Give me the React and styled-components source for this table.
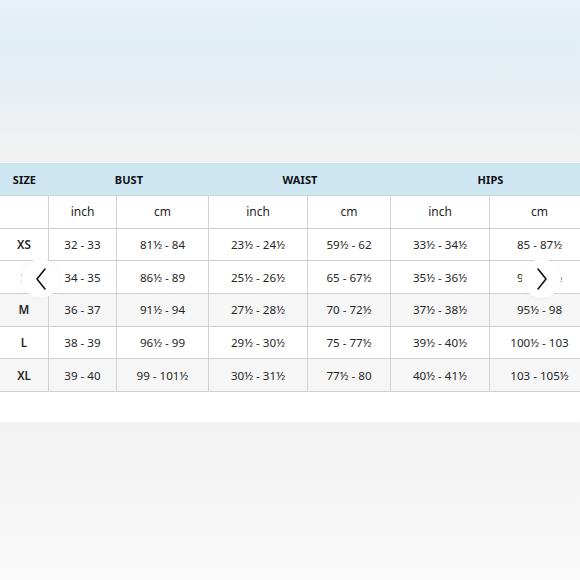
import React from "react";
import styled, { createGlobalStyle } from "styled-components";

const Global = createGlobalStyle`
  html, body { margin: 0; padding: 0; background: #ffffff; }
  body { overflow: hidden; font-family: "Noto Sans", "Open Sans", Arial, sans-serif; color: #222; }
`;

const Page = styled.div`
  width: 580px;
  height: 580px;
  display: flex;
  flex-direction: column;
  overflow: hidden;
  position: relative;
`;

const Sky = styled.div`
  height: 162px;
  flex: none;
  background: linear-gradient(180deg, #e6f2f8 0%, #e2eef5 30%, #e9eff3 60%, #eff1f2 85%, #f1f2f2 100%);
  border-bottom: 1px solid #fbfcfd;
`;

const Card = styled.div`
  background: #ffffff;
  padding-bottom: 30px;
  flex: none;
  position: relative;
`;

const Floor = styled.div`
  flex: 1;
  background: linear-gradient(180deg, #f2f2f2 0%, #f5f5f5 45%, #fafafa 100%);
`;

const cols = "49px 68px 92px 99px 83px 99px 100px";

const HeadRow = styled.div`
  display: grid;
  grid-template-columns: 49px 160px 182px 199px;
  width: 590px;
  height: 33px;
  background: #cde6f2;
  border-bottom: 1px solid #c9d3d8;
  box-sizing: border-box;
`;

const HeadCell = styled.div`
  display: flex;
  align-items: center;
  justify-content: center;
  font-size: 11px;
  font-weight: 700;
  color: #111;
  letter-spacing: 0.1px;
`;

const Row = styled.div`
  display: grid;
  grid-template-columns: ${cols};
  width: 590px;
  height: 32.7px;
  box-sizing: border-box;
  border-bottom: 1px solid #cfcfcf;
  background: ${(p) => (p.$shade ? "#f6f6f6" : "#ffffff")};
`;

const Cell = styled.div`
  display: flex;
  align-items: center;
  justify-content: center;
  border-right: 1px solid #d2d2d2;
  font-size: ${(p) => (p.$unit ? "12px" : "11.6px")};
  font-weight: ${(p) => (p.$bold ? 600 : 400)};
  color: #262626;
  white-space: nowrap;
`;

const Arrow = styled.button`
  position: absolute;
  top: 96px;
  ${(p) => (p.$side === "left" ? "left: 21px;" : "left: 522px;")}
  width: 39px;
  height: 39px;
  border-radius: 50%;
  border: none;
  padding: 0;
  background: #ffffff;
  box-shadow: 0 0 3px rgba(0, 0, 0, 0.08);
  display: flex;
  align-items: center;
  justify-content: center;
  cursor: pointer;
`;

const rows = [
  ["XS", "32 - 33", "81½ - 84", "23½ - 24½", "59½ - 62", "33½ - 34½", "85 - 87½"],
  ["S", "34 - 35", "86½ - 89", "25½ - 26½", "65 - 67½", "35½ - 36½", "90 - 92½"],
  ["M", "36 - 37", "91½ - 94", "27½ - 28½", "70 - 72½", "37½ - 38½", "95½ - 98"],
  ["L", "38 - 39", "96½ - 99", "29½ - 30½", "75 - 77½", "39½ - 40½", "100½ - 103"],
  ["XL", "39 - 40", "99 - 101½", "30½ - 31½", "77½ - 80", "40½ - 41½", "103 - 105½"],
];

const Chevron = ({ dir }) => (
  <svg width="14" height="24" viewBox="0 0 14 24">
    <path
      d={dir === "left" ? "M11 2 L3 12 L11 22" : "M3 2 L11 12 L3 22"}
      fill="none"
      stroke="#111"
      strokeWidth="1.6"
      strokeLinecap="round"
      strokeLinejoin="round"
    />
  </svg>
);

export default function App() {
  return (
    <Page>
      <Global />
      <Sky />
      <Card>
        <HeadRow>
          <HeadCell>SIZE</HeadCell>
          <HeadCell>BUST</HeadCell>
          <HeadCell>WAIST</HeadCell>
          <HeadCell>HIPS</HeadCell>
        </HeadRow>
        <Row>
          <Cell />
          <Cell $unit>inch</Cell>
          <Cell $unit>cm</Cell>
          <Cell $unit>inch</Cell>
          <Cell $unit>cm</Cell>
          <Cell $unit>inch</Cell>
          <Cell $unit>cm</Cell>
        </Row>
        {rows.map((r, i) => (
          <Row key={r[0]} $shade={i === 2 || i === 4}>
            {r.map((v, j) => (
              <Cell key={j} $bold={j === 0}>
                {v}
              </Cell>
            ))}
          </Row>
        ))}
        <Arrow $side="left" aria-label="previous">
          <Chevron dir="left" />
        </Arrow>
        <Arrow $side="right" aria-label="next">
          <Chevron dir="right" />
        </Arrow>
      </Card>
      <Floor />
    </Page>
  );
}
